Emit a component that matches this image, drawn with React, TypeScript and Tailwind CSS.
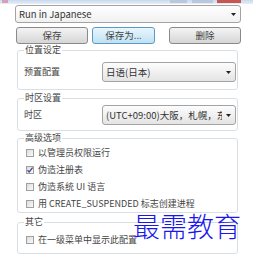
import React from "react";

function Combo({ text, className }: { text: string; className?: string }) {
  return (
    <div
      className={`flex items-center rounded-[3px] border border-[#a3a3a3] bg-linear-to-b from-[#fdfdfd] to-[#e4e4e4] ${className ?? ""}`}
    >
      <span className="flex-1 overflow-hidden whitespace-nowrap pl-[3px] text-[9.5px] leading-[14px] text-[#333]">
        {text}
      </span>
      <svg width="5" height="3" viewBox="0 0 5 3" className="mx-[4px] shrink-0">
        <path d="M0 0h5L2.5 3z" fill="#222" />
      </svg>
    </div>
  );
}

function Check({ label, checked }: { label: string; checked?: boolean }) {
  return (
    <div className="flex h-[17px] items-center gap-[4px] pl-[2px]">
      <div className="relative h-[8px] w-[8px] shrink-0 border border-[#a0a0a0] bg-linear-to-br from-[#dcdcdc] to-[#fafafa]">
        {checked && (
          <svg width="8" height="8" viewBox="0 0 8 8" className="absolute -left-px -top-px">
            <path d="M1.5 4.2 3.2 6 6.6 1.6" fill="none" stroke="#3c4f8a" strokeWidth="1.3" />
          </svg>
        )}
      </div>
      <span className="whitespace-nowrap text-[9px] leading-[12px] text-[#444]">{label}</span>
    </div>
  );
}

export default function App() {
  return (
    <div className="relative flex h-[257px] w-[253px] flex-col overflow-hidden bg-white font-['Noto_Sans_CJK_SC','Liberation_Sans',sans-serif]">
      {/* title strip */}
      <div className="flex h-[4px] items-start bg-linear-to-b from-[#c9d9ec] to-[#e6eef8]">
        <div className="ml-[2px] h-[3px] w-[6px] bg-[#d99fb8]" />
        <div className="ml-auto h-[3px] w-[17px] bg-[#b9c8da]" />
        <div className="ml-[5px] h-[3px] w-[21px] bg-[#b9c8da]" />
        <div className="ml-[4px] mr-[12px] h-[3px] w-[24px] bg-[#c9574f]" />
      </div>

      <div className="flex flex-col pl-[15px] pr-[12px]">
        <Combo text="Run in Japanese" className="mt-[1px] h-[18px] from-white to-[#f1f1f1]" />

        <div className="mt-[4px] flex h-[17px] text-[9.5px] leading-none text-[#444]">
          <button className="ml-[1px] w-[72px] rounded-[3px] border border-[#8a8a8a] bg-linear-to-b from-[#f4f4f4] to-[#d6d6d6]">
            保存
          </button>
          <button className="ml-[4px] w-[63px] rounded-[3px] border border-[#5b9ac7] bg-linear-to-b from-[#eaf6fd] to-[#bfe1f4]">
            保存为...
          </button>
          <button className="ml-[14px] w-[72px] rounded-[3px] border border-[#8a8a8a] bg-linear-to-b from-[#f4f4f4] to-[#d6d6d6]">
            删除
          </button>
        </div>

        {/* 位置设定 */}
        <fieldset className="ml-[2px] mr-[3px] rounded-[3px] border border-[#d8dfe5] pb-[7px] pl-[6px] pr-[1px]">
          <legend className="px-[1px] text-[9px] leading-[12px] text-[#444]">位置设定</legend>
          <div className="mt-[6px] flex h-[20px] items-center">
            <span className="w-[78px] text-[9px] text-[#444]">预置配置</span>
            <Combo text="日语(日本)" className="h-[20px] flex-1" />
          </div>
        </fieldset>

        {/* 时区设置 */}
        <fieldset className="ml-[2px] mr-[3px] mt-[2px] rounded-[3px] border border-[#d8dfe5] pb-[5px] pl-[6px] pr-[1px]">
          <legend className="px-[1px] text-[9px] leading-[12px] text-[#444]">时区设置</legend>
          <div className="mt-[1px] flex h-[20px] items-center">
            <span className="w-[78px] text-[9px] text-[#444]">时区</span>
            <Combo text="(UTC+09:00)大阪，札幌，东京" className="h-[20px] w-[134px]" />
          </div>
        </fieldset>

        {/* 高级选项 */}
        <fieldset className="ml-[2px] mr-[3px] mt-[1px] rounded-[3px] border border-[#d8dfe5] pl-[6px] pr-[1px]">
          <legend className="px-[1px] text-[9px] leading-[12px] text-[#444]">高级选项</legend>
          <Check label="以管理员权限运行" />
          <Check label="伪造注册表" checked />
          <Check label="伪造系统 UI 语言" />
          <Check label="用 CREATE_SUSPENDED 标志创建进程" />
        </fieldset>

        {/* 其它 */}
        <fieldset className="ml-[2px] mr-[3px] mt-[3px] rounded-[3px] border border-[#d8dfe5] pb-[5px] pl-[6px] pr-[1px]">
          <legend className="px-[1px] text-[9px] leading-[12px] text-[#444]">其它</legend>
          <div className="mt-[3px]">
            <Check label="在一级菜单中显示此配置" />
          </div>
        </fieldset>
      </div>

      {/* watermark */}
      <div className="absolute left-[133px] top-[212px] text-[27px] font-light leading-none text-[#1717ee] font-['Noto_Sans_CJK_SC',serif]">
        最需教育
      </div>
    </div>
  );
}
